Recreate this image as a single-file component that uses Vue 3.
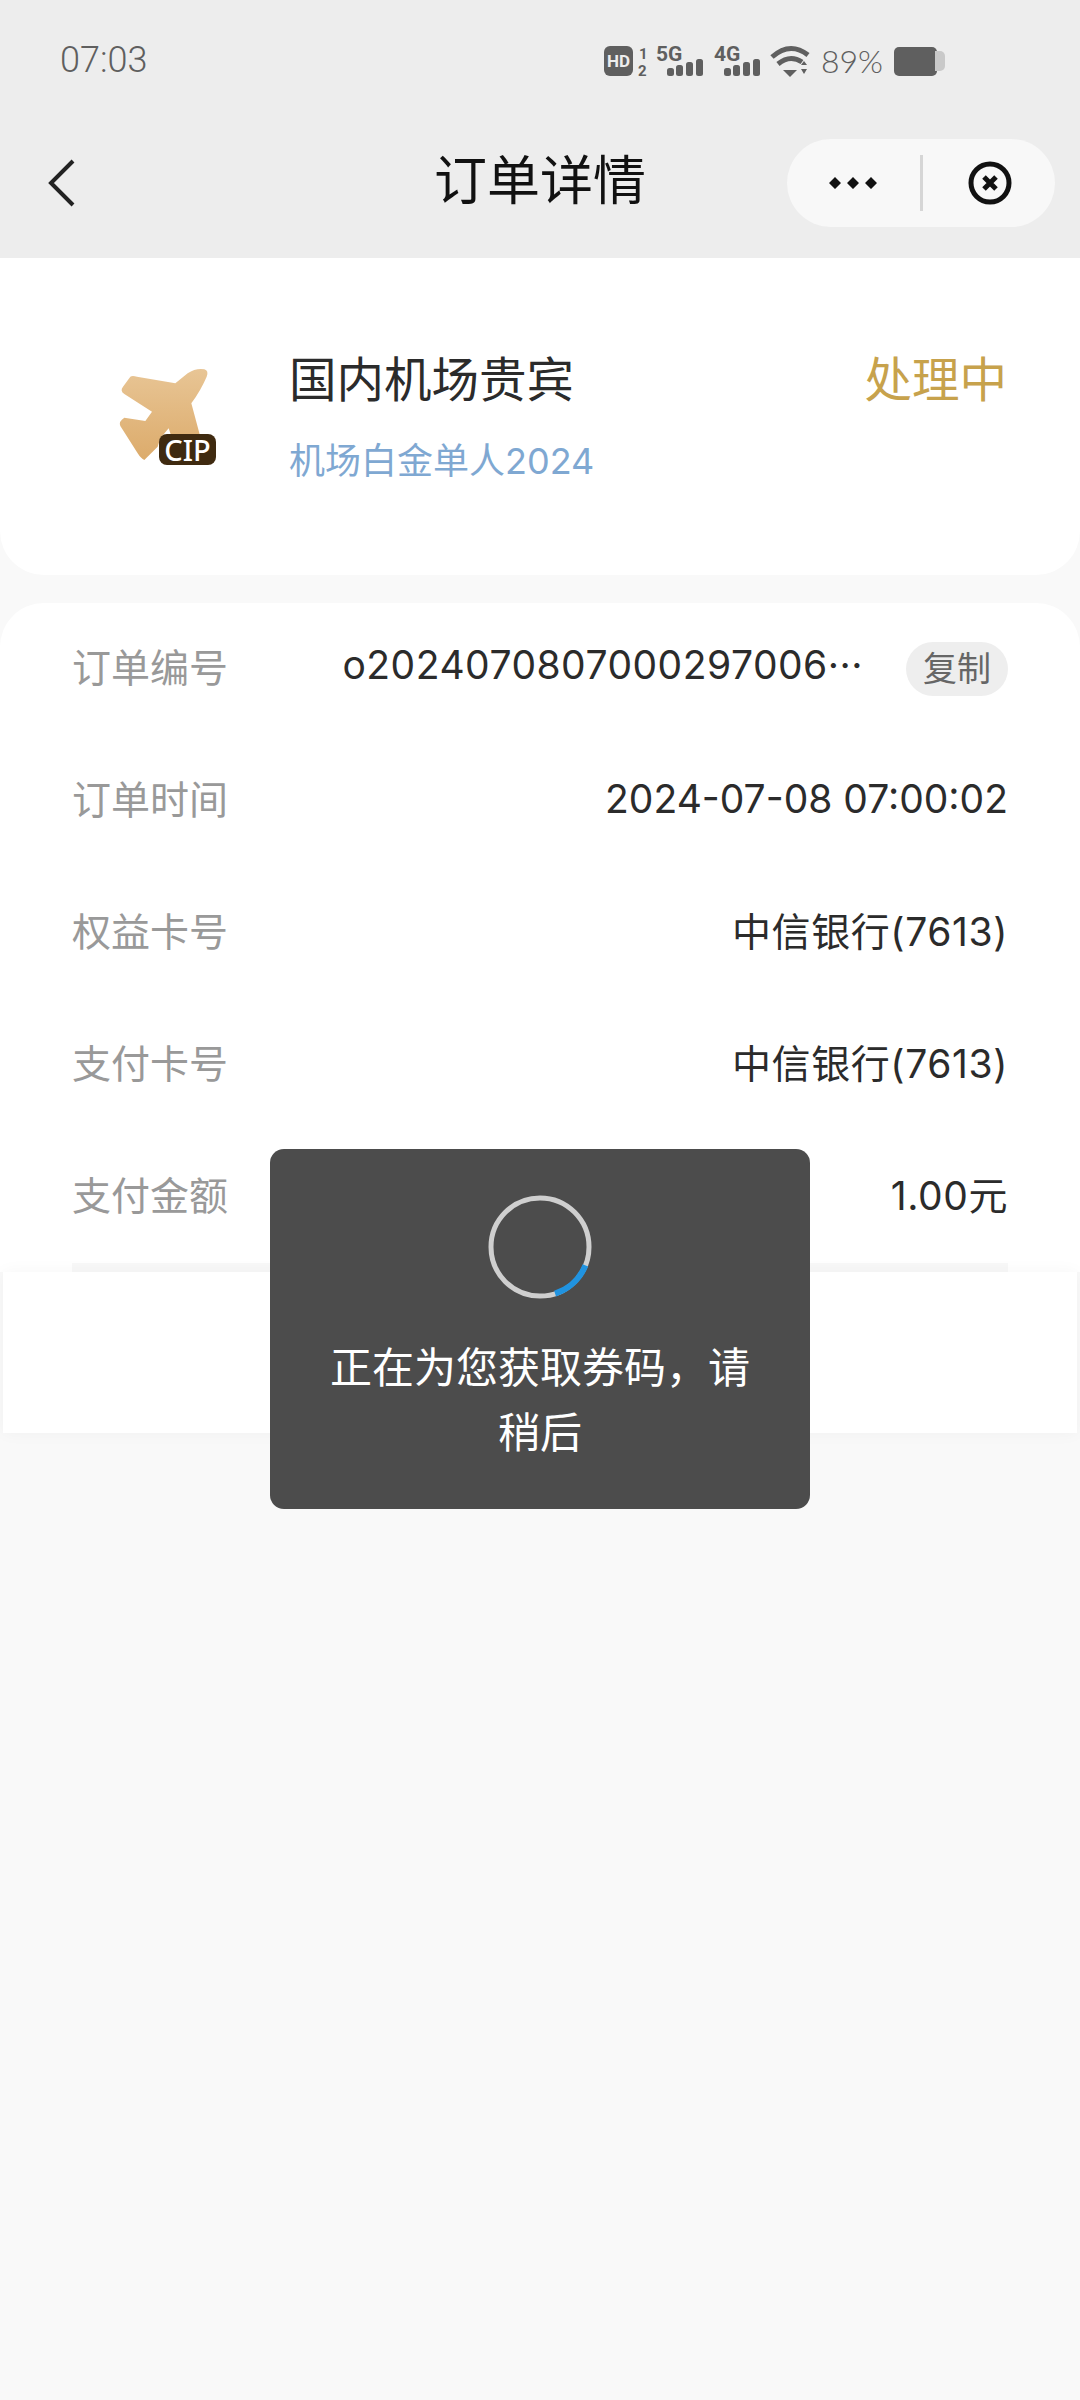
<script setup>
const rows = [
  { label: '订单时间', value: '2024-07-08 07:00:02', tight: true },
  { label: '权益卡号', value: '中信银行(7613)' },
  { label: '支付卡号', value: '中信银行(7613)' },
  { label: '支付金额', value: '1.00元' }
]
</script>

<template>
  <div class="page">
    <header class="head">
      <div class="status">
        <span class="time">07:03</span>
        <div class="status-right">
          <svg class="sig" width="206" height="40" viewBox="0 0 206 40">
            <rect x="0" y="5" width="29" height="30" rx="6" fill="#5f5f5f" />
            <text x="14.5" y="26" class="t-hd">HD</text>
            <text x="35" y="18" class="t-sim">1</text>
            <text x="34" y="35" class="t-sim">2</text>
            <text x="52" y="20" class="t-net">5G</text>
            <g fill="#5f5f5f">
              <rect x="63" y="27" width="7" height="8" rx="2.5" />
              <rect x="72" y="24" width="7" height="11" rx="2.5" />
              <rect x="82" y="21" width="7" height="14" rx="2.5" />
              <rect x="92" y="18" width="7" height="17" rx="2.5" />
            </g>
            <text x="110" y="20" class="t-net">4G</text>
            <g fill="#5f5f5f">
              <rect x="120" y="27" width="7" height="8" rx="2.5" />
              <rect x="129" y="24" width="7" height="11" rx="2.5" />
              <rect x="139" y="21" width="7" height="14" rx="2.5" />
              <rect x="149" y="18" width="7" height="17" rx="2.5" />
            </g>
            <g fill="none" stroke="#5f5f5f" stroke-width="5">
              <path d="M168 16 Q186 0 204 14" />
              <path d="M174 23 Q186 13 198 21" />
            </g>
            <path d="M179 29 L193 29 L186 36 Z" fill="#5f5f5f" />
            <path d="M197 24 L200 20 L203 24 Z M197 28 L203 28 L200 33 Z" fill="#5f5f5f" />
          </svg>
          <span class="pct">89%</span>
          <div class="batt"><span class="batt-body"></span><span class="batt-tip"></span></div>
        </div>
      </div>
      <nav class="nav">
        <button class="back" aria-label="back">
          <svg width="28" height="48" viewBox="0 0 28 48">
            <path d="M25 2 L3 24 L25 46" fill="none" stroke="#222" stroke-width="4" />
          </svg>
        </button>
        <h1 class="title">订单详情</h1>
        <div class="capsule">
          <svg class="dots" width="48" height="14" viewBox="0 0 48 14">
            <path d="M6 1 L12 7 L6 13 L0 7 Z M24 1 L30 7 L24 13 L18 7 Z M42 1 L48 7 L42 13 L36 7 Z" fill="#111" />
          </svg>
          <span class="cap-line"></span>
          <svg class="close" width="44" height="44" viewBox="0 0 44 44">
            <circle cx="22" cy="22" r="19" fill="none" stroke="#111" stroke-width="5" />
            <path d="M16 16 L28 28 M28 16 L16 28" stroke="#111" stroke-width="5" />
          </svg>
        </div>
      </nav>
    </header>

    <section class="card-top">
      <div class="icon-wrap">
        <svg width="130" height="130" viewBox="0 0 390 390">
          <defs>
            <linearGradient id="plane" x1="0" y1="0" x2="0" y2="1">
              <stop offset="0" stop-color="#e8c595" />
              <stop offset="1" stop-color="#dcab6b" />
            </linearGradient>
          </defs>
          <path
            d="M322 88 Q336 92 329 110 Q312 150 283 190 L318 320 L240 340 L215 265 L190 295 L182 320 L142 360 Q132 356 122 340 L70 258 Q64 244 82 233 L145 243 L165 215 L82 162 Q68 152 78 140 L100 110 Q106 106 120 110 L235 130 L272 100 Q296 84 322 88 Z"
            fill="url(#plane)"
          />
        </svg>
        <span class="cip">CIP</span>
      </div>
      <div class="info">
        <div class="name">国内机场贵宾</div>
        <div class="sub">机场白金单人2024</div>
      </div>
      <div class="state">处理中</div>
    </section>

    <section class="card-list">
      <div class="row">
        <span class="label">订单编号</span>
        <span class="value order">o2024070807000297006···</span>
        <span class="copy">复制</span>
      </div>
      <div v-for="r in rows" :key="r.label" class="row">
        <span class="label">{{ r.label }}</span>
        <span class="value" :class="{ tight: r.tight }">{{ r.value }}</span>
      </div>
      <div class="rule"></div>
    </section>

    <div class="blank"></div>

    <div class="toast">
      <svg class="spin" width="110" height="110" viewBox="0 0 110 110">
        <circle cx="55" cy="55" r="49" fill="none" stroke="#cfcfcf" stroke-width="5" />
        <path d="M100.4 73.4 A49 49 0 0 1 70.1 101.6" fill="none" stroke="#2093e0" stroke-width="6" />
      </svg>
      <p class="toast-text">正在为您获取券码，请稍后</p>
    </div>
  </div>
</template>

<style scoped>
.page {
  position: relative;
  width: 1080px;
  min-height: 2400px;
  background: #f9f9f9;
  font-family: Inter, "Noto Sans CJK SC", sans-serif;
  color: #2b2b2b;
}
.head {
  height: 258px;
  background: #ededed;
}
.status {
  height: 120px;
  display: flex;
  justify-content: space-between;
  align-items: flex-start;
  padding: 38px 135px 0 60px;
  box-sizing: border-box;
}
.time {
  font-family: Roboto, sans-serif;
  font-weight: 300;
  font-size: 36px;
  line-height: 44px;
  color: #5f5f5f;
}
.status-right {
  display: flex;
  align-items: center;
  margin-top: 3px;
}
.t-hd {
  font: 700 17px Roboto, sans-serif;
  fill: #ededed;
  text-anchor: middle;
}
.t-sim {
  font: 700 15px Roboto, sans-serif;
  fill: #5f5f5f;
}
.t-net {
  font: 700 21px Roboto, sans-serif;
  fill: #5f5f5f;
}
.pct {
  margin-left: 11px;
  font-family: Lato, sans-serif;
  font-weight: 300;
  font-size: 32px;
  line-height: 40px;
  color: #5f5f5f;
}
.batt {
  display: flex;
  align-items: center;
  margin-left: 11px;
}
.batt-body {
  display: block;
  width: 43px;
  height: 29px;
  border-radius: 5px;
  background: #5f5f5f;
}
.batt-tip {
  display: block;
  width: 10px;
  height: 20px;
  border-radius: 0 5px 5px 0;
  background: #c9c9c9;
  margin-left: -2px;
}
.nav {
  position: relative;
  height: 126px;
  display: flex;
  align-items: center;
  justify-content: space-between;
  padding: 0 25px 0 48px;
  box-sizing: border-box;
}
.back {
  padding: 0;
  border: 0;
  background: none;
  display: flex;
}
.title {
  position: absolute;
  left: 0;
  right: 0;
  top: 1px;
  margin: 0;
  text-align: center;
  font-weight: 400;
  font-size: 53px;
  line-height: 120px;
  color: #111;
}
.capsule {
  position: relative;
  width: 268px;
  height: 88px;
  border-radius: 44px;
  background: #f8f8f8;
  display: flex;
  align-items: center;
  box-sizing: border-box;
  padding-left: 42px;
}
.cap-line {
  width: 3px;
  height: 56px;
  margin-left: 43px;
  background: #d6d6d6;
}
.close {
  margin-left: 45px;
}
.card-top {
  height: 317px;
  background: #fff;
  border-radius: 0 0 44px 44px;
  display: flex;
  align-items: flex-start;
  box-sizing: border-box;
  padding: 82px 73px 0 97px;
}
.icon-wrap {
  position: relative;
  width: 130px;
  height: 130px;
  flex: none;
}
.cip {
  position: absolute;
  left: 62px;
  top: 94px;
  width: 57px;
  height: 31px;
  border-radius: 8px;
  background: #3f2a10;
  color: #fff;
  font: 500 29px/31px "Noto Sans", sans-serif;
  text-align: center;
}
.info {
  margin-left: 62px;
  flex: 1;
}
.name {
  font-size: 47.5px;
  line-height: 60px;
  margin-top: 10px;
}
.sub {
  margin-top: 26px;
  font-size: 36px;
  line-height: 50px;
  color: #7fa8d2;
}
.state {
  font-size: 47.5px;
  line-height: 60px;
  margin-top: 10px;
  color: #c7a24c;
}
.card-list {
  margin-top: 28px;
  background: #fff;
  border-radius: 44px 44px 0 0;
  padding: 0 72px;
  height: 669px;
  box-sizing: border-box;
}
.row {
  height: 132px;
  display: flex;
  align-items: center;
  box-sizing: border-box;
  padding-bottom: 9px;
}
.label {
  font-size: 39px;
  color: #999;
  flex: none;
}
.value {
  margin-left: auto;
  font-size: 39px;
  letter-spacing: 0.6px;
  color: #2b2b2b;
  white-space: nowrap;
}
.value.tight {
  letter-spacing: 0;
  margin-top: 3px;
}
.value.order {
  letter-spacing: 0.5px;
}
.copy {
  flex: none;
  width: 102px;
  height: 54px;
  margin-top: 8px;
  margin-left: 43px;
  border-radius: 27px;
  background: #eee;
  font-size: 34px;
  line-height: 54px;
  text-align: center;
  color: #666;
}
.rule {
  height: 9px;
  background: #f8f8f8;
}
.blank {
  height: 161px;
  margin: 0 3px;
  background: #fff;
  box-shadow: 0 0 16px rgba(0, 0, 0, 0.04);
}
.toast {
  position: absolute;
  left: 270px;
  top: 1149px;
  width: 540px;
  height: 360px;
  box-sizing: border-box;
  padding: 43px 50px 0;
  border-radius: 14px;
  background: #4c4c4c;
  display: flex;
  flex-direction: column;
  align-items: center;
}
.spin {
  flex: none;
}
.toast-text {
  margin: 33px 0 0;
  font-size: 42px;
  line-height: 65px;
  color: #fff;
  text-align: center;
}
</style>
